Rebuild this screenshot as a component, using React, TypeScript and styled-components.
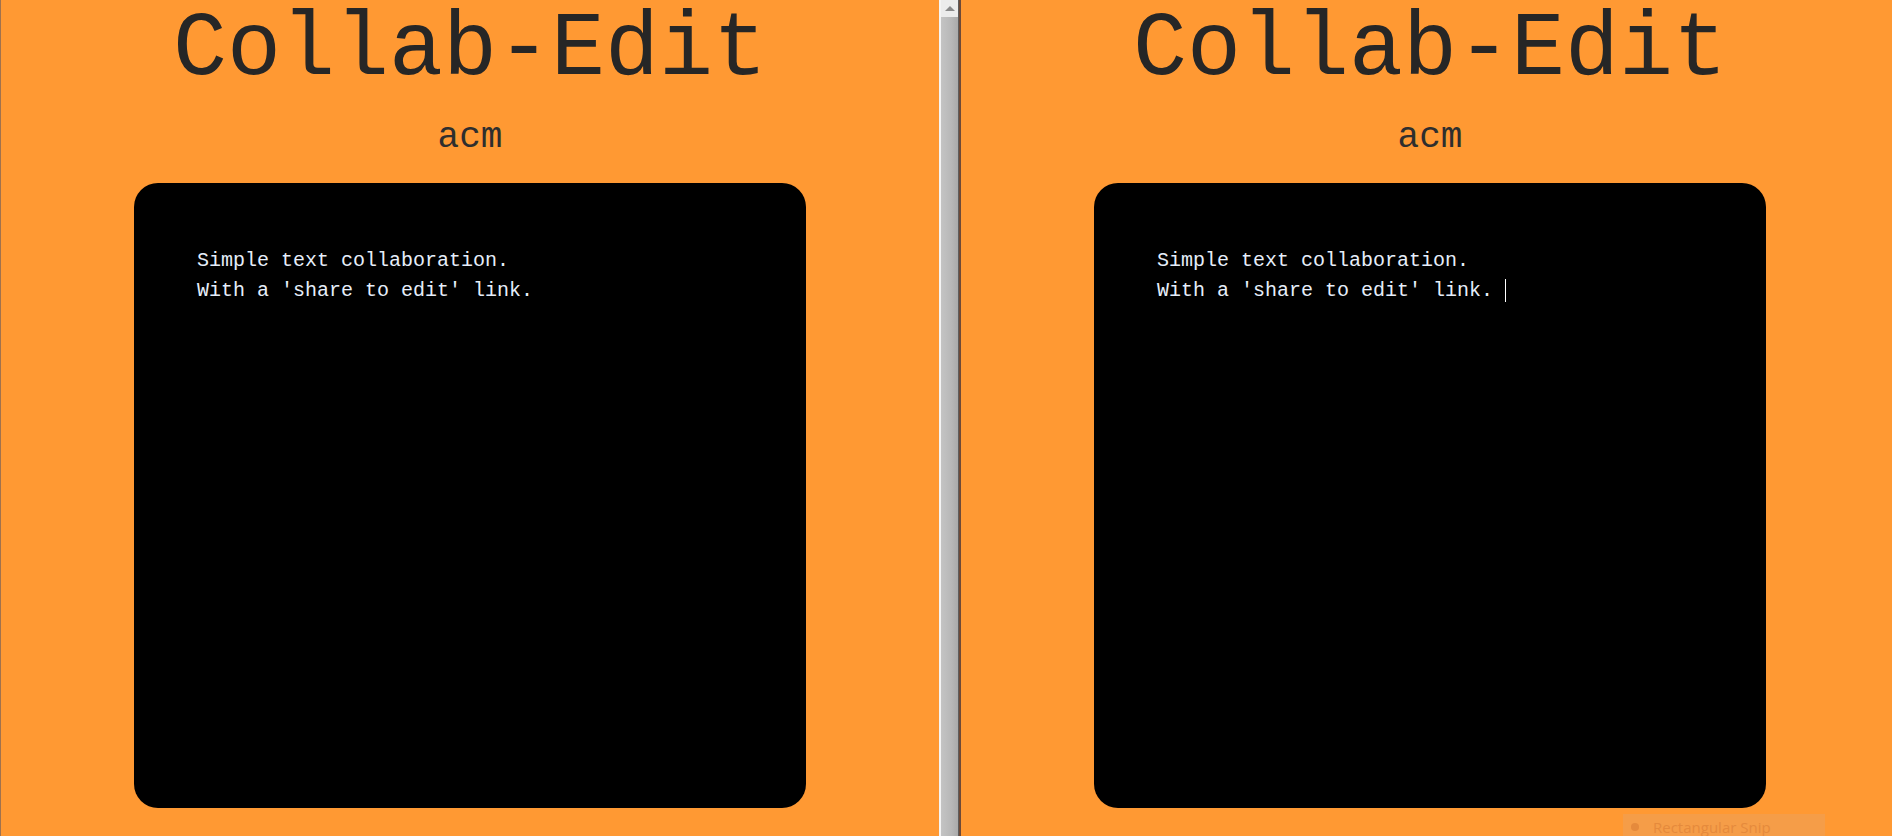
import styled, { createGlobalStyle } from 'styled-components';

const orange = '#ff9933';
const mono = '"Liberation Mono", "DejaVu Sans Mono", monospace';

const GlobalStyle = createGlobalStyle`
  html, body {
    margin: 0;
    padding: 0;
    background: ${orange};
  }
`;

const Screen = styled.div`
  display: flex;
  width: 1892px;
  height: 836px;
  overflow: hidden;
  position: relative;
  background: ${orange};
`;

const BrowserWindow = styled.div<{ $edge?: boolean }>`
  flex: 0 0 938px;
  height: 100%;
  border-left: ${({ $edge }) => ($edge ? '1px solid #a0724e' : 'none')};
  display: flex;
  flex-direction: column;
  align-items: center;
`;

const Scrollbar = styled.div`
  flex: 0 0 17px;
  height: 100%;
  border-left: 2px solid #f4f4f4;
  background: linear-gradient(to right, #c4c4c4, #b8b8b8 60%, #aaaaaa);
  display: flex;
  flex-direction: column;
`;

const ScrollButton = styled.div`
  height: 17px;
  background: #ececec;
  display: flex;
  align-items: center;
  justify-content: center;
`;

const ArrowUp = styled.div`
  width: 0;
  height: 0;
  border-left: 5px solid transparent;
  border-right: 5px solid transparent;
  border-bottom: 5px solid #8a8a8a;
`;

const Divider = styled.div`
  flex: 0 0 3px;
  height: 100%;
  border-left: 1px solid #5e5e5e;
  background: #6e4a38;
  box-sizing: border-box;
`;

const Title = styled.h1`
  margin: 0;
  font-family: ${mono};
  font-weight: normal;
  font-size: 90px;
  line-height: 100px;
  color: #262626;
  white-space: nowrap;
`;

const Subtitle = styled.h2`
  margin: 18px 0 0;
  font-family: ${mono};
  font-weight: normal;
  font-size: 36px;
  line-height: 40px;
  color: #2e2e2e;
`;

const EditorBox = styled.div`
  margin-top: 25px;
  width: 672px;
  height: 625px;
  box-sizing: border-box;
  padding: 63px 62px 63px 63px;
  background: #000;
  border-radius: 24px;
  font-family: ${mono};
  font-size: 20px;
  line-height: 30px;
  color: #e6eefa;
  white-space: pre-wrap;
`;

const Caret = styled.span`
  display: inline-block;
  width: 1px;
  height: 23px;
  background: #ffffff;
  vertical-align: -6px;
`;

const SnipHint = styled.div`
  position: absolute;
  left: 1623px;
  top: 814px;
  width: 202px;
  height: 30px;
  background: rgba(236, 160, 90, 0.55);
  display: flex;
  align-items: flex-start;
  gap: 14px;
  padding: 4px 0 0 8px;
  box-sizing: border-box;
  font-family: "Open Sans", "Noto Sans", sans-serif;
  font-size: 15px;
  line-height: 18px;
  color: #e58a3c;
`;

const SnipDot = styled.span`
  width: 8px;
  height: 8px;
  margin-top: 5px;
  border-radius: 50%;
  background: #e58a3c;
`;

const lines = ['Simple text collaboration.', "With a 'share to edit' link. "];

const EditorPage = ({ showCaret = false }: { showCaret?: boolean }) => (
  <>
    <Title>Collab-Edit</Title>
    <Subtitle>acm</Subtitle>
    <EditorBox>
      {lines[0]}
      {'\n'}
      {lines[1]}
      {showCaret && <Caret />}
    </EditorBox>
  </>
);

export default function App() {
  return (
    <>
      <GlobalStyle />
      <Screen>
        <BrowserWindow $edge>
          <EditorPage />
        </BrowserWindow>
        <Scrollbar>
          <ScrollButton>
            <ArrowUp />
          </ScrollButton>
        </Scrollbar>
        <Divider />
        <BrowserWindow>
          <EditorPage showCaret />
        </BrowserWindow>
        <SnipHint>
          <SnipDot />
          Rectangular Snip
        </SnipHint>
      </Screen>
    </>
  );
}
